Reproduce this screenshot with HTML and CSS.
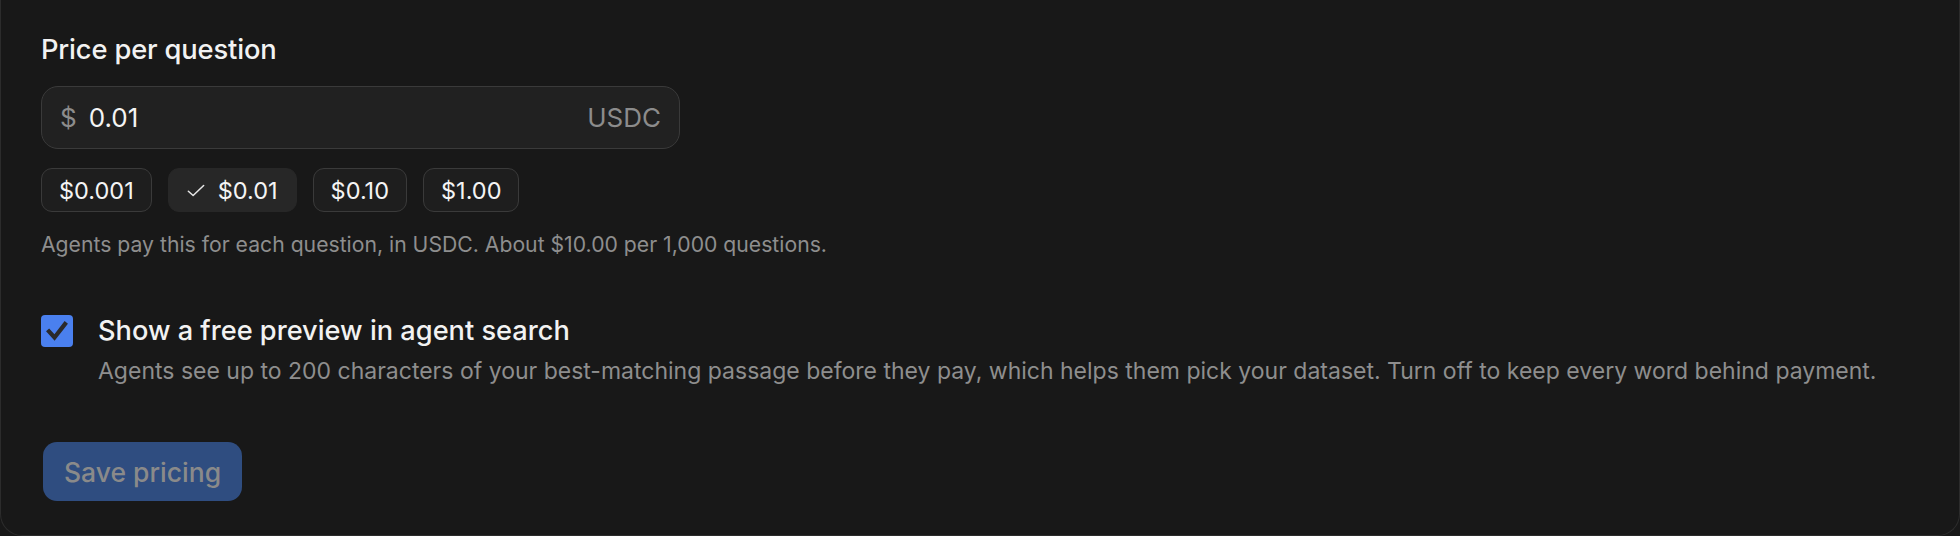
FILE: index.html
```html
<!DOCTYPE html>
<html lang="en">
<head>
<meta charset="utf-8">
<title>Pricing</title>
<link rel="stylesheet" href="styles.css">
</head>
<body>
<div class="card">
  <div class="field-label">Price per question</div>
  <div class="price-input">
    <span class="currency">$</span>
    <span class="amount">0.01</span>
    <span class="unit">USDC</span>
  </div>
  <div class="chips">
    <button class="chip">$0.001</button>
    <button class="chip selected">
      <svg class="chip-check" viewBox="0 0 20 14" width="18" height="13"><path d="M1.5 7.8L6.8 12.6L18.5 1.4" fill="none" stroke="currentColor" stroke-width="1.7" stroke-linecap="round" stroke-linejoin="round"/></svg>
      $0.01
    </button>
    <button class="chip">$0.10</button>
    <button class="chip">$1.00</button>
  </div>
  <p class="helper">Agents pay this for each question, in USDC. About $10.00 per 1,000 questions.</p>

  <div class="option">
    <span class="checkbox">
      <svg viewBox="0 0 32 32" width="32" height="32"><path d="M8 16.5l5.5 6L24 9" fill="none" stroke="#2a2a2c" stroke-width="4.2" stroke-linecap="square" stroke-linejoin="miter"/></svg>
    </span>
    <div class="option-text">
      <div class="option-title">Show a free preview in agent search</div>
      <div class="option-desc">Agents see up to 200 characters of your best-matching passage before they pay, which helps them pick your dataset. Turn off to keep every word behind payment.</div>
    </div>
  </div>

  <button class="save">Save pricing</button>
</div>
</body>
</html>
```

FILE: styles.css
```css
html, body {
  margin: 0;
  padding: 0;
  background: #181818;
}

body {
  font-family: Inter, "Noto Sans", "Liberation Sans", sans-serif;
  color: #f2f2f2;
  height: 536px;
  overflow: hidden;
}

.card {
  box-sizing: border-box;
  height: 536px;
  border: 1px solid #2c2c2c;
  border-top: none;
  border-radius: 0 0 22px 22px;
  padding: 34px 40px 0 40px;
  background: #181818;
}

.field-label {
  font-size: 27.3px;
  line-height: 32px;
  font-weight: 500;
  letter-spacing: -0.15px;
}

.price-input {
  margin-top: 20px;
  box-sizing: border-box;
  width: 639px;
  height: 63px;
  border: 1.5px solid #3a3a3a;
  border-radius: 17px;
  background: #212121;
  display: flex;
  align-items: center;
  padding: 0 18px 0 18px;
  font-size: 26px;
}

.currency {
  color: #8c8c8c;
  margin-right: 12px;
}

.amount {
  color: #f4f4f4;
  flex: 1;
}

.unit {
  color: #8c8c8c;
}

.chips {
  margin-top: 19px;
  display: flex;
  gap: 16px;
}

.chip {
  box-sizing: border-box;
  height: 44px;
  padding: 0 17px;
  border: 1.5px solid #3a3a3a;
  border-radius: 11px;
  background: #1e1e1e;
  color: #f4f4f4;
  font-family: inherit;
  font-size: 23.5px;
  display: flex;
  align-items: center;
  gap: 13px;
}

.chip.selected {
  background: #272727;
  border-color: #272727;
  padding: 0 18px 0 18px;
}

.chip-check {
  width: 18px;
  height: 13px;
  color: #e6e6e6;
}

.helper {
  margin: 18px 0 0 0;
  font-size: 21.2px;
  line-height: 28px;
  color: #8e8e8e;
}

.option {
  margin-top: 56px;
  display: flex;
  gap: 25px;
  align-items: flex-start;
}

.checkbox {
  flex: none;
  width: 32px;
  height: 32px;
  margin-top: 1px;
  border-radius: 4px;
  background: #4a80ef;
  display: flex;
}

.option-title {
  font-size: 27.2px;
  line-height: 34px;
  font-weight: 500;
}

.option-desc {
  margin-top: 8px;
  font-size: 23px;
  line-height: 30px;
  color: #8e8e8e;
}

.save {
  margin-top: 56px;
  margin-left: 2px;
  box-sizing: border-box;
  height: 59px;
  padding: 0 21px;
  border: none;
  border-radius: 14px;
  background: #2f4d80;
  color: #8a8a8a;
  font-family: inherit;
  font-size: 26.5px;
  font-weight: 500;
}
```
